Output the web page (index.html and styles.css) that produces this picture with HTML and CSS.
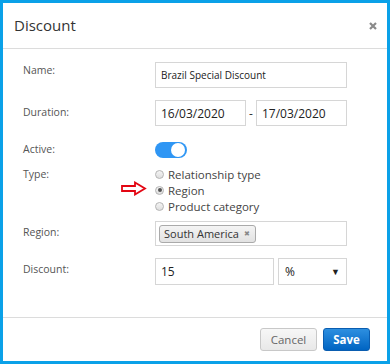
FILE: index.html
```html
<!DOCTYPE html>
<html lang="en">
<head>
    <meta charset="UTF-8">
    <title>Discount</title>
    <link rel="stylesheet" href="styles.css">
</head>
<body>
    <div class="modal">
        <div class="modal-header">
            <h2>Discount</h2>
            <span class="close">
                <svg width="8" height="8" viewBox="0 0 8 8"><path d="M1 1L7 7M7 1L1 7" stroke="#8a8a8a" stroke-width="2.2"/></svg>
            </span>
        </div>

        <div class="modal-body">
            <div class="row row-name">
                <label>Name:</label>
                <input class="field small-text" type="text" value="Brazil Special Discount">
            </div>

            <div class="row row-duration">
                <label>Duration:</label>
                <div class="dates">
                    <input class="field" type="text" value="16/03/2020">
                    <span class="dash">-</span>
                    <input class="field" type="text" value="17/03/2020">
                </div>
            </div>

            <div class="row row-active">
                <label>Active:</label>
                <div><span class="toggle"><span class="knob"></span></span></div>
            </div>

            <div class="row row-type">
                <label>Type:</label>
                <div class="radios">
                    <!-- annotation arrow -->
                    <svg class="arrow" width="26" height="15" viewBox="0 0 26 15">
                        <path d="M1 5H14V1.5L24 7.5L14 13.5V10H1Z" fill="none" stroke="#e30613" stroke-width="1.8" stroke-linejoin="miter"/>
                    </svg>
                    <div class="radio"><span class="dot"></span>Relationship type</div>
                    <div class="radio"><span class="dot checked"></span>Region</div>
                    <div class="radio"><span class="dot"></span>Product category</div>
                </div>
            </div>

            <div class="row row-region">
                <label>Region:</label>
                <div class="field tags">
                    <span class="tag">South America <span class="tag-x">&#10006;</span></span>
                </div>
            </div>

            <div class="row row-discount">
                <label>Discount:</label>
                <div class="discount">
                    <input class="field" type="text" value="15">
                    <div class="field select">% <span class="caret">&#9660;</span></div>
                </div>
            </div>
        </div>

        <div class="modal-footer">
            <button class="btn btn-cancel">Cancel</button>
            <button class="btn btn-save">Save</button>
        </div>
    </div>
</body>
</html>
```

FILE: styles.css
```css
/* Global Styles */
body {
    margin: 0;
    font-family: 'Open Sans', sans-serif;
    color: #333;
    background: #fff;
}

.modal {
    width: 390px;
    height: 364px;
    box-sizing: border-box;
    border: 3px solid #0aa1e8;
    display: flex;
    flex-direction: column;
}

/* Header */
.modal-header {
    height: 45px;
    border-bottom: 1px solid #dcdcdc;
    display: flex;
    align-items: center;
    justify-content: space-between;
    padding: 0 10px 0 11px;
}

.modal-header h2 {
    margin: 0;
    font-size: 15px;
    font-weight: normal;
    color: #333;
    position: relative;
    top: -1px;
}

.close {
    display: flex;
}

/* Body */
.modal-body {
    flex-grow: 1;
    padding: 13px 0 0 20px;
}

.row {
    display: grid;
    grid-template-columns: 132px 192px;
}

.row label {
    font-size: 10.5px;
    color: #555;
    padding-top: 1px;
}

.row-name { margin-bottom: 12px; }
.row-duration { margin-bottom: 16px; }
.row-active { margin-bottom: 8px; }
.row-type { margin-bottom: 7px; }
.row-region { margin-bottom: 12px; }

.row-name label { padding-top: 1px; }
.row-duration label { padding-top: 5px; }
.row-active label { padding-top: 0; }
.row-type label { padding-top: 1px; }
.row-region label { padding-top: 4px; }
.row-discount label { padding-top: 4px; }

.field {
    box-sizing: border-box;
    border: 1px solid #d6d6d6;
    height: 26px;
    padding: 0 5px;
    font-family: 'Open Sans', sans-serif;
    font-size: 12px;
    color: #222;
    background: #fff;
    outline: none;
    width: 100%;
    margin: 0;
}

.small-text {
    font-size: 10px;
}

.dates {
    display: flex;
    align-items: center;
}

.dates .field {
    width: 91px;
}

.dash {
    width: 10px;
    text-align: center;
    font-size: 12px;
    color: #333;
}

/* Toggle */
.toggle {
    display: block;
    width: 32px;
    height: 16px;
    border-radius: 8px;
    background: #2f96f4;
    position: relative;
}

.knob {
    position: absolute;
    right: 2px;
    top: 1px;
    width: 14px;
    height: 14px;
    border-radius: 50%;
    background: #fff;
}

/* Radios */
.radios {
    position: relative;
}

.arrow {
    position: absolute;
    left: -34px;
    top: 15px;
}

.radio {
    display: flex;
    align-items: center;
    height: 16px;
    font-size: 11.5px;
    color: #444;
}

.dot {
    box-sizing: border-box;
    width: 9px;
    height: 9px;
    border-radius: 50%;
    border: 1px solid #b4b4b4;
    background: linear-gradient(#f4f4f4, #dedede);
    margin: 0 4px 0 0;
    position: relative;
}

.dot.checked::after {
    content: '';
    position: absolute;
    left: 1.5px;
    top: 1.5px;
    width: 4px;
    height: 4px;
    border-radius: 50%;
    background: #555;
}

/* Region tags */
.tags {
    height: 25px;
    padding: 3px;
    display: flex;
    align-items: center;
}

.tag {
    box-sizing: border-box;
    height: 18px;
    display: flex;
    align-items: center;
    padding: 0 5px 0 4px;
    border: 1px solid #aaa;
    border-radius: 3px;
    background: linear-gradient(#f4f4f4, #e2e2e2);
    font-size: 11px;
    color: #333;
}

.tag-x {
    font-size: 7px;
    color: #888;
    margin-left: 5px;
}

/* Discount */
.discount {
    display: flex;
    gap: 4px;
}

.discount .field {
    height: 27px;
}

.discount .field:first-child {
    width: 119px;
}

.select {
    width: 69px;
    display: flex;
    align-items: center;
    justify-content: space-between;
    padding: 0 6px;
}

.caret {
    font-size: 9px;
    color: #222;
}

/* Footer */
.modal-footer {
    height: 44px;
    border-top: 1px solid #dcdcdc;
    display: flex;
    justify-content: flex-end;
    align-items: flex-start;
    gap: 6px;
    padding: 10px 17px 0 0;
    box-sizing: border-box;
}

.btn {
    height: 23px;
    font-family: 'Open Sans', sans-serif;
    font-size: 11.5px;
    border-radius: 3px;
    padding: 0;
    cursor: pointer;
}

.btn-cancel {
    width: 57px;
    color: #666;
    border: 1px solid #c8c8c8;
    background: linear-gradient(#f7f7f7, #e8e8e8);
}

.btn-save {
    width: 47px;
    color: #fff;
    font-weight: bold;
    border: 1px solid #0a5db0;
    background: linear-gradient(#2d8fe0, #0064c2);
}
```
